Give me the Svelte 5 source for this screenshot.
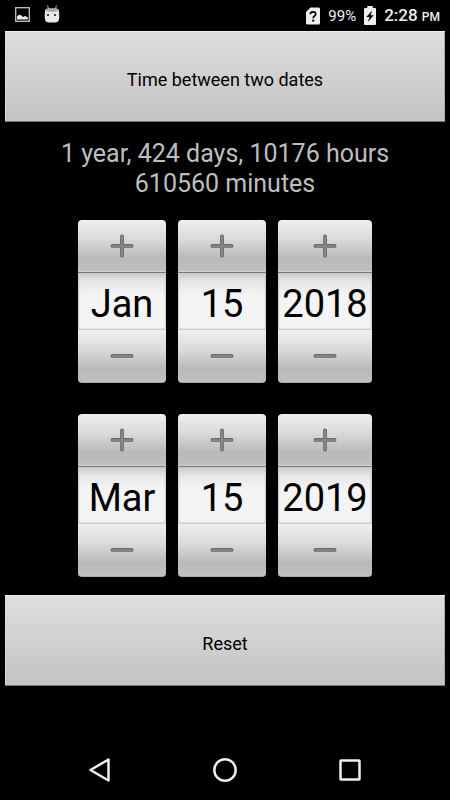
<script>
  const months = ['Jan', 'Feb', 'Mar', 'Apr', 'May', 'Jun', 'Jul', 'Aug', 'Sep', 'Oct', 'Nov', 'Dec'];
  const initial = () => [new Date(Date.UTC(2018, 0, 15)), new Date(Date.UTC(2019, 2, 15))];
  const parts = ['month', 'day', 'year'];
  const groups = ['Start', 'End'];

  let dates = $state.raw(initial());

  function show(date, part) {
    if (part === 'month') return months[date.getUTCMonth()];
    return String(part === 'day' ? date.getUTCDate() : date.getUTCFullYear());
  }

  function step(index, part, by) {
    const next = new Date(dates[index]);
    if (part === 'month') next.setUTCMonth(next.getUTCMonth() + by);
    else if (part === 'day') next.setUTCDate(next.getUTCDate() + by);
    else next.setUTCFullYear(next.getUTCFullYear() + by);
    dates = dates.map((d, i) => (i === index ? next : d));
  }

  let days = $derived(Math.round(Math.abs(dates[1] - dates[0]) / 86400000));
  let years = $derived(Math.floor(days / 365));
</script>

<div class="screen">
  <header class="status">
    <div class="group notices">
      <svg width="15" height="15" viewBox="0 0 15 15" aria-hidden="true">
        <rect x="0.7" y="0.7" width="13.6" height="13.6" fill="#000" stroke="#c4c4c4" stroke-width="1.3" />
        <path d="M2 12.5V9.5L4 7.8L6 8.2L8 10L10 9L12.8 10.3V12.5Z" fill="#eee" />
      </svg>
      <svg width="16" height="18" viewBox="0 0 16 18" aria-hidden="true">
        <path d="M3.6 0.5L4.5 4M12.4 0.5L11.5 4" stroke="#bbb" stroke-width="1" />
        <path d="M1 6Q1 3.5 4 3.5H12Q15 3.5 15 6L15.3 12Q15.3 17.5 11 17.5H5Q.7 17.5.7 12Z" fill="#e8e8e8" />
        <path d="M1.5 6Q2 3.5 4.5 3.5H11.5Q14 3.5 14.5 6Q8 8 1.5 6Z" fill="#aaa" />
        <rect x="3" y="9" width="2" height="2" fill="#444" />
        <rect x="10" y="9" width="2" height="2" fill="#444" />
      </svg>
    </div>
    <div class="group">
      <svg width="14" height="18" viewBox="0 0 14 18" aria-hidden="true">
        <path d="M4.5 0.5H12.5Q14 .5 14 2V16Q14 17.5 12.5 17.5H1.5Q0 17.5 0 16V5Z" fill="#eee" />
        <path d="M4.3 7.2Q4.3 4.8 7 4.8Q9.7 4.8 9.7 7Q9.7 8.2 8.3 9.2Q7.2 10 7.2 11.3" fill="none" stroke="#000" stroke-width="1.7" />
        <rect x="6.2" y="12.6" width="2" height="2" fill="#000" />
      </svg>
      <span class="percent">99%</span>
      <svg width="12" height="19" viewBox="0 0 12 19" aria-hidden="true">
        <path d="M3.3 0H8.7V2H11Q12 2 12 3V18Q12 19 11 19H1Q0 19 0 18V3Q0 2 1 2H3.3Z" fill="#eee" />
        <path d="M8.2 4.5L2.3 11H5.6L3.8 16L9.8 9.2H6.6Z" fill="#000" />
      </svg>
      <span class="clock">2:28 <small>PM</small></span>
    </div>
  </header>

  <main>
    <button class="wide" type="button">Time between two dates</button>

    <p class="result" aria-live="polite">
      {years} {years === 1 ? 'year' : 'years'}, {days} days, {days * 24} hours<br />
      {days * 1440} minutes
    </p>

    <div class="dates">
      {#each groups as group, index}
        <div class="date" role="group" aria-label="{group} date">
          {#each parts as part}
            <div class="picker {part}">
              <button class="step" type="button" aria-label="Increase {part}" onclick={() => step(index, part, 1)}>
                <svg width="24" height="24" viewBox="0 0 24 24" aria-hidden="true">
                  <path d="M12 2.5V21.5M2.5 12H21.5" stroke="#6c6c6c" stroke-width="4" stroke-linecap="round" />
                  <path d="M12 3V21M3 12.5H21" stroke="#868686" stroke-width="2.6" stroke-linecap="round" />
                </svg>
              </button>
              <input type="text" readonly aria-label="{group} {part}" value={show(dates[index], part)} />
              <button class="step" type="button" aria-label="Decrease {part}" onclick={() => step(index, part, -1)}>
                <svg width="24" height="24" viewBox="0 0 24 24" aria-hidden="true">
                  <path d="M2.5 12H21.5" stroke="#6c6c6c" stroke-width="4" stroke-linecap="round" />
                  <path d="M3 12.5H21" stroke="#868686" stroke-width="2.6" stroke-linecap="round" />
                </svg>
              </button>
            </div>
          {/each}
        </div>
      {/each}
    </div>

    <button class="wide" type="button" onclick={() => (dates = initial())}>Reset</button>
  </main>

  <nav aria-label="System">
    <button type="button" aria-label="Back">
      <svg width="26" height="26" viewBox="0 0 26 26"><path d="M21.5 2.5V23.5L3.5 13Z" /></svg>
    </button>
    <button type="button" aria-label="Home">
      <svg width="26" height="26" viewBox="0 0 26 26"><circle cx="13" cy="13" r="10.7" /></svg>
    </button>
    <button type="button" aria-label="Recent apps">
      <svg width="26" height="26" viewBox="0 0 26 26"><rect x="3.5" y="3.5" width="19" height="19" rx="0.5" /></svg>
    </button>
  </nav>
</div>

<style>
  :global(body) {
    margin: 0;
    background: #000;
  }

  .screen {
    box-sizing: border-box;
    display: flex;
    flex-direction: column;
    min-height: 100vh;
    background: #000;
    font-family: Roboto, "Liberation Sans", sans-serif;
  }

  button,
  input {
    box-sizing: border-box;
    margin: 0;
    padding: 0;
    border: 0;
    border-radius: 0;
    font-family: inherit;
    color: #000;
  }

  svg {
    display: block;
  }

  .status {
    display: flex;
    justify-content: space-between;
    align-items: center;
    height: 31px;
    padding: 0 10px 0 15px;
    color: #eee;
  }

  .group {
    display: flex;
    align-items: center;
    gap: 8px;
  }

  .notices {
    gap: 14px;
    padding-bottom: 3px;
  }

  .percent {
    font-size: 15px;
    line-height: 18px;
  }

  .clock {
    font-size: 17px;
    line-height: 20px;
    font-weight: 500;
  }

  .clock small {
    font-size: 12px;
  }

  main {
    flex: 1;
    display: flex;
    flex-direction: column;
    padding: 0 5px;
  }

  .wide {
    height: 91px;
    border-top: 1px solid #efefef;
    border-bottom: 1px solid #777;
    background: linear-gradient(#dedede, #c3c3c3);
    box-shadow: inset 1px 0 #dadada, inset -1px 0 #aaa;
    font-size: 18px;
    padding-top: 6px;
  }

  .result {
    margin: 17px 0 21px;
    text-align: center;
    font-size: 25px;
    line-height: 30px;
    color: #bebebe;
  }

  .dates {
    display: flex;
    flex-direction: column;
    gap: 31px;
    margin-bottom: 18px;
  }

  .date {
    display: flex;
    justify-content: center;
    gap: 12px;
  }

  .picker {
    display: flex;
    flex-direction: column;
    width: 88px;
    border-radius: 4px;
    overflow: hidden;
  }

  .picker.year {
    width: 94px;
  }

  .step {
    display: flex;
    justify-content: center;
    align-items: center;
    height: 52px;
    background: linear-gradient(#f0f0f0, #d8d8d8 40%, #b9b9b9 75%, #bfbfbf);
    border-bottom: 1px solid #d4d4d4;
  }

  .step:last-child {
    height: 53px;
    border-bottom-color: #aaa;
  }

  .picker input {
    width: 100%;
    height: 58px;
    padding-top: 5px;
    border-top: 1px solid #777;
    border-bottom: 1px solid #ccc;
    background: linear-gradient(#c8c8c8, #e6e6e6 15%, #f4f4f4 40%, #f4f4f4);
    box-shadow: inset 1px 0 2px #ccc, inset -1px 0 2px #ccc;
    outline: none;
    text-align: center;
    font-size: 38px;
    line-height: 51px;
  }

  nav {
    display: flex;
    height: 60px;
    padding: 0 38px;
  }

  nav button {
    flex: 1;
    display: flex;
    justify-content: center;
    align-items: center;
    background: none;
  }

  nav svg {
    fill: none;
    stroke: #eee;
    stroke-width: 2.5;
    stroke-linejoin: round;
  }
</style>
